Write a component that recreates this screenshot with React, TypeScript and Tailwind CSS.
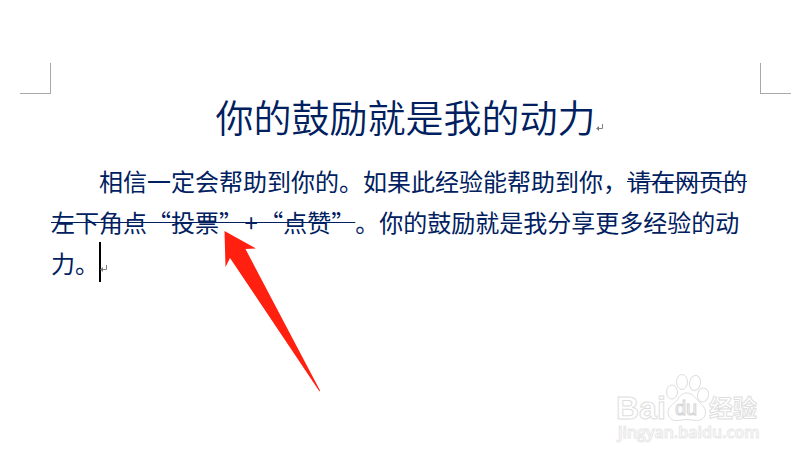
type MarkProps = { className?: string };

function ReturnMark({ className = '' }: MarkProps) {
  return (
    <svg
      className={`inline-block h-2 w-2 align-baseline ${className}`}
      viewBox="0 0 8 8"
      fill="none"
      aria-hidden="true"
    >
      <path d="M6.5 0v4.5H1" stroke="#808080" />
      <path d="M0 4.5 3 2v5z" fill="#808080" />
    </svg>
  );
}

function Arrow() {
  return (
    <svg
      className="pointer-events-none absolute top-full left-[173px] -mt-[52px] h-[162px] w-[98px]"
      viewBox="0 0 98 162"
      aria-hidden="true"
    >
      <path d="M0.500 0 32 17.500 21.500 18 96 159.500 95.500 160.500 6 27 1.500 36z" fill="#ff2010" />
    </svg>
  );
}

function Watermark() {
  return (
    <svg
      className="h-[76px] w-[152px]"
      viewBox="0 0 152 76"
      fill="#fff"
      stroke="#dedede"
      role="img"
      aria-label="Baidu 经验"
    >
      <text x="1" y="49" className="font-['Liberation_Sans',sans-serif] text-[32px] font-bold">
        Bai
      </text>
      <ellipse cx="57" cy="22" rx="5.500" ry="7" />
      <ellipse cx="67" cy="12" rx="5.500" ry="7.500" />
      <ellipse cx="80" cy="13" rx="5.500" ry="7.500" transform="rotate(10 80 13)" />
      <ellipse cx="88" cy="25" rx="5.500" ry="7" transform="rotate(12 88 25)" />
      <path d="M71.500 23c-5 0-7 4-10 8-3 3-9 6-8.500 12 0.500 5 4 8 9 7.500 4 0 6-1 9.500-1s7 1 10 1c5 0 9-3 9-8 0-6-5-9-8-12-3-4-6-7.500-11-7.500z" />
      <text
        x="60"
        y="45"
        stroke="#d4d4d4"
        className="font-['Liberation_Sans',sans-serif] text-[20px]"
      >
        du
      </text>
      <text
        x="94"
        y="47"
        className="font-['Noto_Sans_CJK_SC',sans-serif] text-[24px] font-bold"
      >
        经验
      </text>
      <text
        x="3"
        y="68"
        stroke="#e8e8e8"
        className="font-['Open_Sans',sans-serif] text-[16px] font-semibold"
      >
        jingyan.baidu.com
      </text>
    </svg>
  );
}

export default function App() {
  return (
    <div
      lang="zh-CN"
      className="relative flex min-h-screen flex-col bg-white font-['Noto_Sans_CJK_SC',sans-serif] text-[#002060]"
    >
      {/* page margin corners */}
      <div className="flex justify-between pt-[63px] pr-[13px] pl-5">
        <div className="h-[31px] w-[31px] border-r border-b border-[#a8a8a8]" />
        <div className="h-[31px] w-[31px] border-b border-l border-[#a8a8a8]" />
      </div>

      <main className="pr-11 pl-[51px]">
        <h1 className="text-center text-[38px] leading-[44px] font-[350]">
          你的鼓励就是我的动力
          <ReturnMark className="-mr-2" />
        </h1>
        <div className="relative mt-[22px]">
          <p className="indent-12 text-[24px] leading-[41px] [text-spacing-trim:space-all]">
            相信一定会帮助到你的。如果此经验能帮助到你，
            <s className="decoration-1 [text-decoration-skip-ink:none]">
              请在网页的左下角点“投票”&#8202;+&#8202;“点赞”
            </s>
            。你的鼓励就是我分享更多经验的动力。
            <span className="inline-block h-10 w-0.5 bg-black align-top" />
            <ReturnMark className="-ml-px" />
          </p>
          <Arrow />
        </div>
      </main>

      <div className="absolute right-[37px] bottom-[15px]">
        <Watermark />
      </div>
    </div>
  );
}
